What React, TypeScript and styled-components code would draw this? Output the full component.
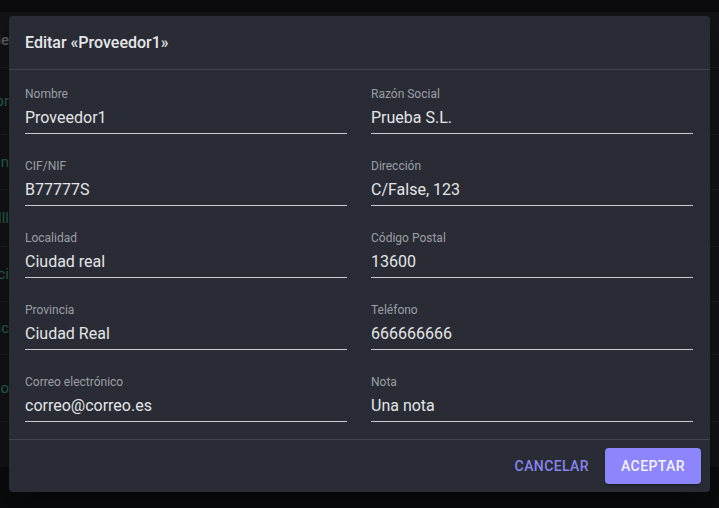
import styled, {createGlobalStyle} from "styled-components";

const GlobalStyle = createGlobalStyle`
  html, body {
    margin: 0;
    padding: 0;
    background: #0e0f12;
    font-family: Roboto, "Liberation Sans", sans-serif;
  }
`;

// the table behind the dialog only shows its last letters at the left edge
const rows = [
    {text: "or", height: 67},
    {text: "n", height: 55},
    {text: "lll", height: 57},
    {text: "ci", height: 55},
    {text: "ic", height: 53},
    {text: "go", height: 67},
];

const fields = [
    {label: "Nombre", value: "Proveedor1"},
    {label: "Razón Social", value: "Prueba S.L."},
    {label: "CIF/NIF", value: "B77777S"},
    {label: "Dirección", value: "C/False, 123"},
    {label: "Localidad", value: "Ciudad real"},
    {label: "Código Postal", value: "13600"},
    {label: "Provincia", value: "Ciudad Real"},
    {label: "Teléfono", value: "666666666"},
    {label: "Correo electrónico", value: "correo@correo.es"},
    {label: "Nota", value: "Una nota"},
];

export default function App() {
    return (
        <Page>
            <GlobalStyle/>
            <TopBar/>
            <Table>
                <Row $height={56}>
                    <Cell $header>de</Cell>
                </Row>
                {rows.map((r) => (
                    <Row key={r.text} $height={r.height}>
                        <Cell>{r.text}</Cell>
                    </Row>
                ))}
            </Table>

            <Backdrop>
                <Dialog>
                    <Title>Editar «Proveedor1»</Title>
                    <Content>
                        {fields.map((f) => (
                            <Field key={f.label}>
                                <Label>{f.label}</Label>
                                <Input defaultValue={f.value}/>
                            </Field>
                        ))}
                    </Content>
                    <Actions>
                        <TextButton>Cancelar</TextButton>
                        <FilledButton>Aceptar</FilledButton>
                    </Actions>
                </Dialog>
            </Backdrop>
        </Page>
    );
}

const Page = styled.div`
  position: relative;
  width: 719px;
  height: 508px;
  overflow: hidden;
  background: #0e0f12;
`;

const TopBar = styled.div`
  height: 12px;
  background: #0d0e11;
`;

const Table = styled.div`
  display: flex;
  flex-direction: column;
  background: #16171b;
  height: 455px;
`;

const Row = styled.div<{ $height: number }>`
  display: flex;
  align-items: center;
  height: ${(p) => p.$height}px;
  border-bottom: 1px solid #222429;
  box-sizing: border-box;
`;

const Cell = styled.div<{ $header?: boolean }>`
  width: 9px;
  display: flex;
  justify-content: flex-end;
  white-space: nowrap;
  font-size: 15px;
  font-weight: ${(p) => (p.$header ? 500 : 400)};
  color: ${(p) => (p.$header ? "#6d6f74" : "#2f6f5f")};
`;

const Backdrop = styled.div`
  position: absolute;
  inset: 0;
  display: flex;
  align-items: flex-start;
  justify-content: center;
  padding-top: 16px;
  background: rgba(0, 0, 0, 0.15);
`;

const Dialog = styled.div`
  width: 701px;
  height: 476px;
  display: flex;
  flex-direction: column;
  background: #292c34;
  border-radius: 4px;
  box-shadow: 0 11px 15px -7px rgba(0, 0, 0, 0.3), 0 24px 38px 3px rgba(0, 0, 0, 0.2);
  overflow: hidden;
`;

const Title = styled.div`
  padding: 15px 16px 14px;
  font-size: 16px;
  line-height: 24px;
  font-weight: 500;
  color: #e6e7ea;
  border-bottom: 1px solid #41444c;
`;

const Content = styled.div`
  display: grid;
  grid-template-columns: 1fr 1fr;
  column-gap: 24px;
  row-gap: 24px;
  padding: 16px 17px 17px 16px;
  border-bottom: 1px solid #41444c;
`;

const Field = styled.label`
  display: flex;
  flex-direction: column;
`;

const Label = styled.span`
  font-size: 12px;
  line-height: 16px;
  color: #9c9fa6;
`;

const Input = styled.input`
  margin-top: 3px;
  padding: 0 0 3px;
  border: none;
  border-bottom: 1px solid #c9cacd;
  background: transparent;
  outline: none;
  font-family: Roboto, "Liberation Sans", sans-serif;
  font-size: 16px;
  line-height: 24px;
  height: 29px;
  box-sizing: border-box;
  color: #e4e5e8;
`;

const Actions = styled.div`
  flex: 1;
  display: flex;
  align-items: center;
  justify-content: flex-end;
  gap: 8px;
  padding: 0 9px 0 16px;
`;

const ButtonBase = styled.button`
  height: 36px;
  padding: 0 16px;
  border: none;
  border-radius: 4px;
  font-family: Roboto, "Liberation Sans", sans-serif;
  font-size: 14px;
  font-weight: 500;
  letter-spacing: 0.4px;
  text-transform: uppercase;
  cursor: pointer;
`;

const TextButton = styled(ButtonBase)`
  background: transparent;
  color: #8a84f2;
  padding: 0 8px;
`;

const FilledButton = styled(ButtonBase)`
  min-width: 96px;
  background: #8c85fb;
  color: #f4f3ff;
  box-shadow: 0 3px 1px -2px rgba(0, 0, 0, 0.2), 0 2px 2px 0 rgba(0, 0, 0, 0.14);
`;
